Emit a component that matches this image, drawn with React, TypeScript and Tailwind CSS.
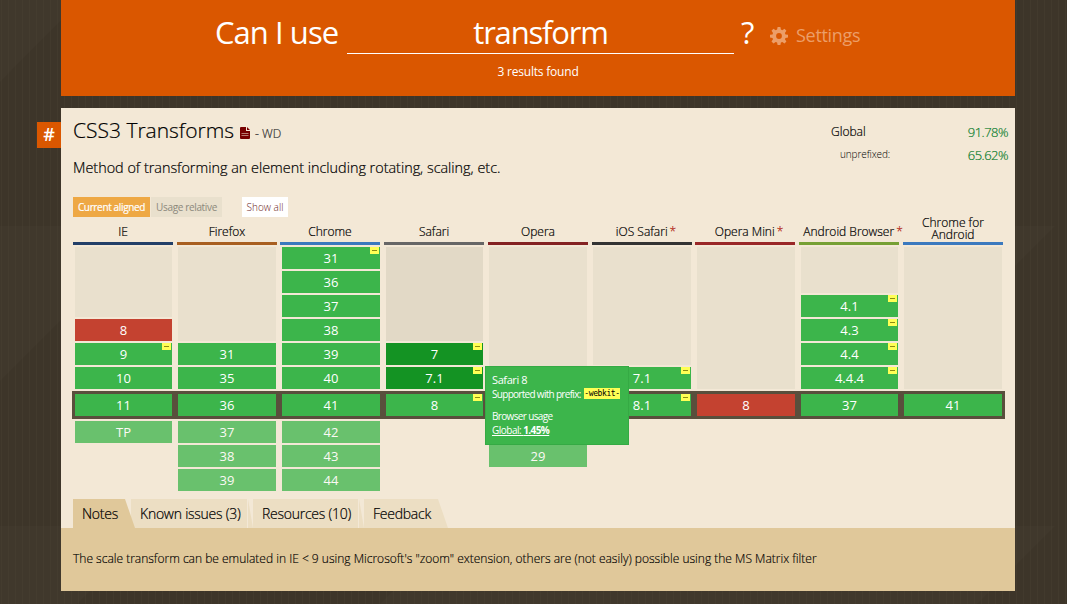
import React from "react";

type Cell = { v: string; k?: "y" | "n" | "d"; p?: boolean };
type Browser = {
  name: string;
  bar: string;
  empty: string;
  star?: boolean;
  label?: string;
  past: Cell[];
  now: Cell;
  next: string[];
};

const browsers: Browser[] = [
  { name: "IE", bar: "bg-[#223f68]", empty: "h-[70px]", past: [{ v: "8", k: "n" }, { v: "9", p: true }, { v: "10" }], now: { v: "11" }, next: ["TP"] },
  { name: "Firefox", bar: "bg-[#a85f20]", empty: "h-[94px]", past: [{ v: "31" }, { v: "35" }], now: { v: "36" }, next: ["37", "38", "39"] },
  { name: "Chrome", bar: "bg-[#3b79be]", empty: "", past: [{ v: "31", p: true }, { v: "36" }, { v: "37" }, { v: "38" }, { v: "39" }, { v: "40" }], now: { v: "41" }, next: ["42", "43", "44"] },
  { name: "Safari", bar: "bg-[#666666]", empty: "h-[94px]", past: [{ v: "7", k: "d", p: true }, { v: "7.1", k: "d", p: true }], now: { v: "8", p: true }, next: [] },
  { name: "Opera", bar: "bg-[#842222]", empty: "h-[142px]", past: [], now: { v: "" }, next: ["", "29"] },
  { name: "iOS Safari", bar: "bg-[#333333]", empty: "h-[118px]", star: true, label: "pl-[8px]", past: [{ v: "7.1", p: true }], now: { v: "8.1", p: true }, next: [] },
  { name: "Opera Mini", bar: "bg-[#992727]", empty: "h-[142px]", star: true, label: "pl-[8px]", past: [], now: { v: "8", k: "n" }, next: [] },
  { name: "Android Browser", bar: "bg-[#76a034]", empty: "h-[46px]", star: true, label: "pl-[4px] -mr-[4px]", past: [{ v: "4.1", p: true }, { v: "4.3", p: true }, { v: "4.4", p: true }, { v: "4.4.4", p: true }], now: { v: "37" }, next: [] },
  { name: "Chrome for Android", bar: "bg-[#3b79be]", empty: "h-[142px]", past: [], now: { v: "41" }, next: [] },
];

const cellGrid = "grid grid-cols-[97px_98px_98px_97px_98px_98px_98px_97px_98px] gap-x-[6px]";
const headGrid = "grid grid-cols-[104px_103px_104px_104px_104px_103px_104px_104px_100px]";
const fills = { y: "bg-[#3cb54b]", n: "bg-[#c44230]", d: "bg-[#149323]" };

function Version({ cell }: { cell: Cell }) {
  return (
    <div className={`relative h-[22px] shrink-0 text-center text-[13px] leading-[23px] text-white ${fills[cell.k ?? "y"]}`}>
      {cell.v}
      {cell.p && (
        <span className="absolute top-0 right-[1px] flex h-[7px] w-[9px] justify-center bg-[#ffff55] pt-[3px]">
          <i className="h-px w-[5px] bg-[#8c8c12]" />
        </span>
      )}
    </div>
  );
}

function Background() {
  return (
    <svg className="absolute inset-0 -z-10 h-full w-full" viewBox="0 0 1067 604">
      <defs>
        <pattern id="lines" width="7" height="604" patternUnits="userSpaceOnUse">
          <rect x="1" width="1" height="604" fill="#4a4234" />
        </pattern>
      </defs>
      <rect width="1067" height="604" fill="#3d3529" />
      <g fill="#40382c">
        <path d="M0 0H81L0 82Z" />
        <path d="M0 226H155L0 381Z" />
        <path d="M1015 226H1055L1015 266Z" />
        <path d="M1015 526H1055L1015 566Z" />
        <path d="M0 526H155L77 604H0Z" />
        <path d="M393 591H990L977 604H380Z" />
      </g>
      <rect width="1067" height="604" fill="url(#lines)" opacity=".4" />
    </svg>
  );
}

function Header() {
  return (
    <header className="h-[96px] w-[954px] bg-[#da5700] text-white">
      <div className="flex h-[54px] items-start pl-[154px] text-[31px] leading-[40px]">
        <h1 className="mt-[12px] w-[132px] whitespace-nowrap tracking-[-0.95px]">Can I use</h1>
        <div className="h-[54px] w-[387px] border-b border-white pt-[12px] text-center tracking-[-1.2px]">transform</div>
        <span className="mt-[12px] ml-[7px] w-[29px]">?</span>
        <div className="mt-[15px] flex items-center text-[18px] text-[#ec9e68]">
          <svg className="mt-px size-[18px]" viewBox="0 0 18 18" fill="currentColor" fillRule="evenodd">
            <path d="M7.6 0h2.8l.5 2.6 1.4.6L14.5 1.8l1.9 2-1.5 2.1.6 1.5 2.5.4v2.6l-2.5.5-.6 1.4 1.5 2.1-1.9 2-2.2-1.5-1.4.6-.5 2.5H7.6l-.5-2.5-1.4-.6-2.2 1.5-2-2L3 12.3l-.5-1.4L0 10.4V7.8l2.5-.4L3 5.9 1.5 3.8l2-2 2.2 1.4 1.4-.6ZM9 6.1a2.9 2.9 0 1 0 0 5.8 2.9 2.9 0 0 0 0-5.8Z" />
          </svg>
          <span className="ml-[8px] tracking-[-0.3px]">Settings</span>
        </div>
      </div>
      <p className="pt-[9px] text-center text-[12px] leading-[18px] tracking-[-0.2px]">3 results found</p>
    </header>
  );
}

function Tooltip() {
  return (
    <aside className="absolute top-[119px] left-[412px] h-[79px] w-[144px] border border-[#35aa44] bg-[#3cb54b] px-[6px] pt-[5px] text-[10px] leading-[14px] whitespace-nowrap text-white">
      <p className="text-[11px] leading-[15px] tracking-[-0.4px]">Safari 8</p>
      <p className="flex h-[13px] items-center">
        <span className="w-[92px] tracking-[-0.7px]">Supported with prefix:</span>
        <code className="h-[11px] w-[36px] bg-[#ffff55] text-center font-['DejaVu_Sans_Mono',monospace] text-[8px] leading-[11px] tracking-[-0.4px] text-black">-webkit-</code>
      </p>
      <p className="mt-[9px] tracking-[-0.65px]">Browser usage</p>
      <p className="tracking-[-0.5px]"><span className="underline">Global: <b className="tracking-[-0.6px]">1.45%</b></span></p>
    </aside>
  );
}

function SupportTable() {
  return (
    <div className="relative w-[930px]">
      <div className={cellGrid + " pl-[2px]"}>
        {browsers.map((b) => (
          <div key={b.name} className="flex h-[142px] flex-col gap-[2px]">
            {b.empty && <div className={`shrink-0 ${b.empty} ${b.name === "Safari" ? "bg-[#e2d9c6]" : "bg-[#e9e0cd]"}`} />}
            {b.past.map((c) => <Version key={c.v} cell={c} />)}
          </div>
        ))}
      </div>
      <div className={cellGrid + " mt-[2px] -ml-px w-[933px] bg-[#594f3c] p-[3px]"}>
        {browsers.map((b) => <Version key={b.name} cell={b.now} />)}
      </div>
      <div className={cellGrid + " mt-[2px] h-[78px] pl-[2px]"}>
        {browsers.map((b) => (
          <div key={b.name} className="flex flex-col gap-[2px] opacity-75">
            {b.next.map((v) => <Version key={v} cell={{ v }} />)}
          </div>
        ))}
      </div>
      <Tooltip />
    </div>
  );
}

function Tabs() {
  return (
    <div className="flex h-[29px] text-[14px] leading-[30px] font-light tracking-[-0.25px] whitespace-nowrap [-webkit-text-stroke:0.2px]">
      <div className="relative z-10 -mr-[4px] w-[62px] bg-[#e0c89a] pl-[9px] [clip-path:polygon(0_0,52px_0,62px_100%,0_100%)]">Notes</div>
      <div className="w-[117px] border-r border-[#f3e8d6] bg-[#ecdec3] pl-[9px]">Known issues (3)</div>
      <div className="w-[5px] bg-[#ecdec3] [clip-path:polygon(0_0,5px_100%,0_100%)]" />
      <div className="w-[106px] border-r border-[#f3e8d6] bg-[#ecdec3] pl-[9px]">Resources (10)</div>
      <div className="w-[5px] bg-[#ecdec3] [clip-path:polygon(0_0,5px_100%,0_100%)]" />
      <div className="w-[84px] bg-[#ecdec3] pl-[9px] [clip-path:polygon(0_0,74px_0,84px_100%,0_100%)]">Feedback</div>
    </div>
  );
}

export default function App() {
  return (
    <main className="relative isolate h-[604px] w-[1067px] overflow-hidden font-['Open_Sans',sans-serif] text-[#000]">
      <Background />
      <div className="pl-[61px]"><Header /></div>
      <div className="mt-[12px] flex items-start pl-[37px]">
        <a className="mt-[14px] h-[26px] w-[24px] bg-[#da5700] text-center text-[18px] leading-[24px] font-semibold text-white">#</a>
        <section className="w-[954px] bg-[#f3e8d6]">
          <div className="flex h-[89px] justify-between pr-[7px] pl-[12px] font-light [-webkit-text-stroke:0.2px]">
            <div>
              <h2 className="flex h-[44px] items-center">
                <span className="mt-px w-[167px] text-[21px] whitespace-nowrap">CSS3 Transforms</span>
                <svg className="mt-[5px] h-[12px] w-[10px]" viewBox="0 0 10 12">
                  <path d="M1 0h5v4h4v7a1 1 0 0 1-1 1H1a1 1 0 0 1-1-1V1a1 1 0 0 1 1-1Zm6 0 3 3H7Z" fill="#700" />
                  <path d="M1.5 6.5h7M1.5 8.5h7" stroke="#c99a8d" strokeWidth=".8" />
                </svg>
                <span className="mt-[7px] ml-[5px] text-[12px] text-[#333]">- WD</span>
              </h2>
              <p className="mt-[5px] text-[14.4px] leading-[22px]">Method of transforming an element including rotating, scaling, etc.</p>
            </div>
            <div className="w-[177px] pt-[12px] text-[13px] leading-[23px]">
              <div className="flex justify-between text-[12px]"><span>Global</span><span className="mt-px text-[13px] tracking-[-0.5px] text-[#0b7d2c]">91.78%</span></div>
              <div className="flex justify-between pl-[9px] text-[10px] leading-[22px]"><span className="-mt-px tracking-[-0.1px] [-webkit-text-stroke:0]">unprefixed:</span><span className="text-[13px] tracking-[-0.5px] text-[#0b7d2c]">65.62%</span></div>
            </div>
          </div>
          <div className="flex h-[20px] pl-[12px] text-[10px] leading-[20px] whitespace-nowrap">
            <div className="w-[77px] bg-[#eea844] text-center tracking-[-0.35px] text-white [-webkit-text-stroke:0.2px]">Current aligned</div>
            <div className="ml-px w-[71px] bg-[#e9e0cd] text-center tracking-[-0.35px] text-[#8c887c]">Usage relative</div>
            <div className="ml-[20px] w-[46px] bg-white text-center font-light text-[#6b1a1a]">Show all</div>
          </div>
          <div className={headGrid + " h-[30px] pl-[12px] text-[12px] leading-[12px] font-light [-webkit-text-stroke:0.2px]"}>
            {browsers.map((b) => (
              <div key={b.name} className="flex h-[28px] w-[100px] flex-col justify-end">
                {b.name === "Chrome for Android" ? (
                  <div className="mb-px shrink-0 text-center">Chrome for<br />Android</div>
                ) : (
                  <div className={`mb-[4px] shrink-0 text-center whitespace-nowrap ${b.label ?? ""}`}>
                    {b.name}
                    {b.star && <span className="ml-[2px] text-[#b42a1a]">*</span>}
                  </div>
                )}
                <div className={"h-[3px] shrink-0 " + b.bar} />
              </div>
            ))}
          </div>
          <div className="h-[252px] pl-[12px]"><SupportTable /></div>
          <div className="pl-[12px]"><Tabs /></div>
          <p className="h-[63px] bg-[#e0c89a] pl-[12px] text-[12px] leading-[61px] font-light [-webkit-text-stroke:0.15px]">The scale transform can be emulated in IE &lt; 9 using Microsoft's "zoom" extension, others are (not easily) possible using the MS Matrix filter</p>
        </section>
      </div>
    </main>
  );
}
